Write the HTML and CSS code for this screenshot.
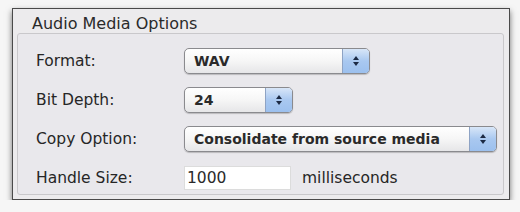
FILE: index.html
```html
<!DOCTYPE html>
<html lang="en">
<head>
    <meta charset="UTF-8">
    <title>Audio Media Options</title>
    <link rel="stylesheet" href="styles.css">
</head>
<body>
    <div class="window">
        <div class="title">Audio Media Options</div>
        <div class="group">
            <div class="row">
                <span class="label">Format:</span>
                <div class="popup popup-format">
                    <span class="value">WAV</span>
                    <span class="stepper">
                        <svg width="8" height="12" viewBox="0 0 8 12"><path d="M4 1 L7 5 L1 5 Z M4 11 L7 7 L1 7 Z" fill="#1c2a44"/></svg>
                    </span>
                </div>
            </div>
            <div class="row">
                <span class="label">Bit Depth:</span>
                <div class="popup popup-depth">
                    <span class="value">24</span>
                    <span class="stepper">
                        <svg width="8" height="12" viewBox="0 0 8 12"><path d="M4 1 L7 5 L1 5 Z M4 11 L7 7 L1 7 Z" fill="#1c2a44"/></svg>
                    </span>
                </div>
            </div>
            <div class="row">
                <span class="label">Copy Option:</span>
                <div class="popup popup-copy">
                    <span class="value">Consolidate from source media</span>
                    <span class="stepper">
                        <svg width="8" height="12" viewBox="0 0 8 12"><path d="M4 1 L7 5 L1 5 Z M4 11 L7 7 L1 7 Z" fill="#1c2a44"/></svg>
                    </span>
                </div>
            </div>
            <div class="row">
                <span class="label">Handle Size:</span>
                <input class="field" type="text" value="1000">
                <span class="unit">milliseconds</span>
            </div>
        </div>
    </div>
</body>
</html>
```

FILE: styles.css
```css
/* Окно настроек */
body {
    margin: 0;
    background-color: #f6f6f6;
    font-family: 'DejaVu Sans', sans-serif;
    color: #222;
}
.window {
    margin: 8px 0 0 12px;
    width: 496px;
    height: 190px;
    background-color: #ecebed;
    border: 1px solid #4a4a4a;
    box-shadow: 0 3px 6px rgba(0, 0, 0, 0.55);
    display: flex;
    flex-direction: column;
}
.title {
    height: 24px;
    line-height: 29px;
    padding-left: 19px;
    font-size: 16px;
    color: #2a2a2a;
}
.group {
    margin-left: 4px;
    width: 487px;
    height: 162px;
    border: 1px solid #c9c8cb;
    border-radius: 3px;
    background-color: #e9e8ec;
    box-sizing: border-box;
    padding-top: 13px;
    display: flex;
    flex-direction: column;
    gap: 12px;
}
.row {
    display: flex;
    align-items: center;
    height: 27px;
}
.label {
    width: 166px;
    padding-left: 18px;
    box-sizing: border-box;
    font-size: 15.5px;
    color: #262626;
}
.popup {
    height: 26px;
    display: flex;
    align-items: stretch;
    border: 1px solid #8a8a8e;
    border-radius: 5px;
    background: linear-gradient(#ffffff, #f6f6f6 50%, #e6e6e8);
    box-shadow: 0 1px 1px rgba(0, 0, 0, 0.2);
    box-sizing: border-box;
    overflow: hidden;
}
.value {
    flex: 1;
    padding-left: 9px;
    line-height: 24px;
    font-size: 14px;
    font-weight: bold;
    color: #2a2a2a;
}
.stepper {
    width: 26px;
    display: flex;
    align-items: center;
    justify-content: center;
    border-left: 1px solid #8ea3c4;
    background: linear-gradient(#d8e6f8, #a9c8f0 50%, #9cc0ee);
}
.popup-format {
    width: 186px;
}
.popup-depth {
    width: 109px;
}
.popup-copy {
    width: 313px;
}
.field {
    width: 107px;
    height: 24px;
    margin: 0;
    padding: 0 2px;
    box-sizing: border-box;
    border: 1px solid #dcdcdc;
    background-color: #fff;
    font-family: 'DejaVu Sans', sans-serif;
    font-size: 15.5px;
    color: #2a2a2a;
}
.unit {
    margin-left: 11px;
    font-size: 15.5px;
    color: #262626;
}
```
